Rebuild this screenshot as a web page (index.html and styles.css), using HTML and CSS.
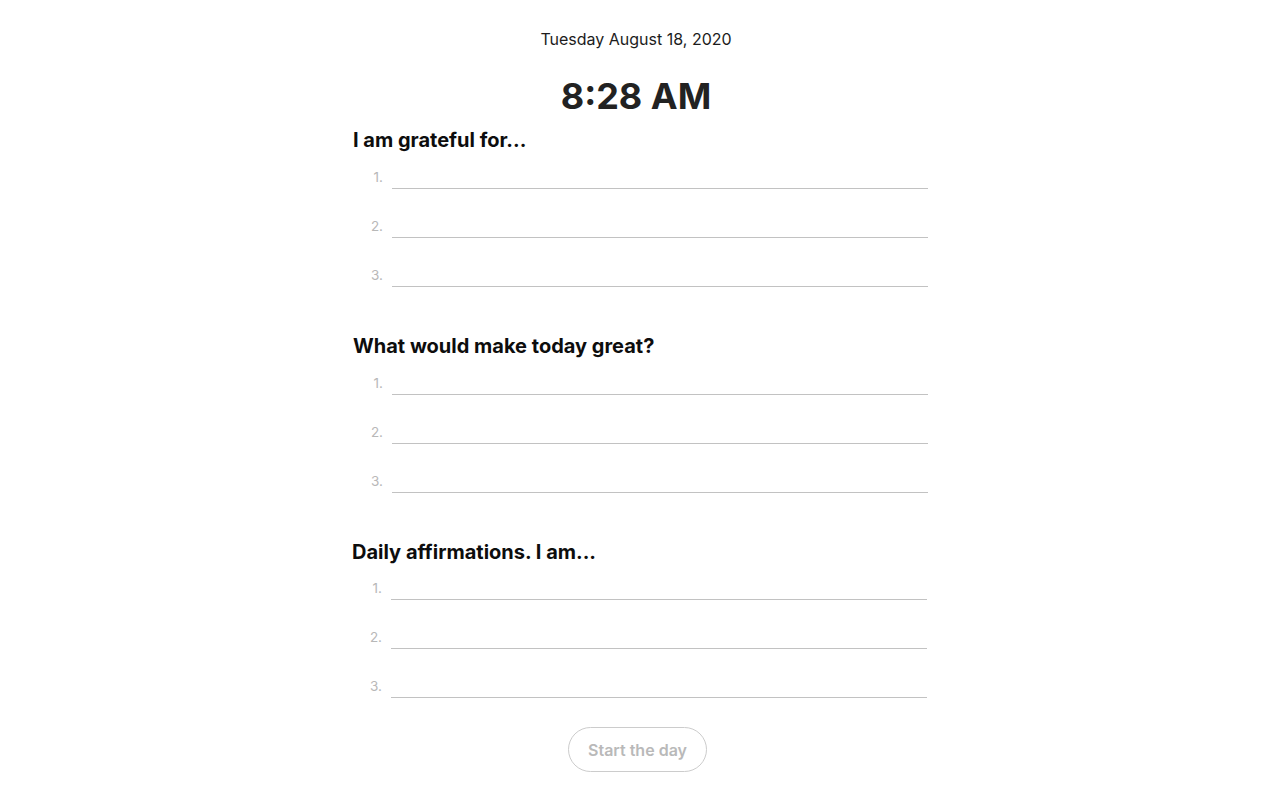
FILE: index.html
```html
<!DOCTYPE html>
<html lang="en">
<head>
<meta charset="utf-8">
<title>Morning journal</title>
<link rel="stylesheet" href="styles.css">
</head>
<body>
<main class="page">
  <header class="header">
    <div class="date">Tuesday August 18, 2020</div>
    <div class="time">8:28 AM</div>
  </header>

  <section class="section">
    <h2 class="heading">I am grateful for...</h2>
    <ol class="list">
      <li class="row"><span class="num">1.</span><input class="field" type="text"></li>
      <li class="row"><span class="num">2.</span><input class="field" type="text"></li>
      <li class="row"><span class="num">3.</span><input class="field" type="text"></li>
    </ol>
  </section>

  <section class="section">
    <h2 class="heading">What would make today great?</h2>
    <ol class="list">
      <li class="row"><span class="num">1.</span><input class="field" type="text"></li>
      <li class="row"><span class="num">2.</span><input class="field" type="text"></li>
      <li class="row"><span class="num">3.</span><input class="field" type="text"></li>
    </ol>
  </section>

  <section class="section section-shift">
    <h2 class="heading">Daily affirmations. I am...</h2>
    <ol class="list">
      <li class="row"><span class="num">1.</span><input class="field" type="text"></li>
      <li class="row"><span class="num">2.</span><input class="field" type="text"></li>
      <li class="row"><span class="num">3.</span><input class="field" type="text"></li>
    </ol>
  </section>

  <div class="actions">
    <button class="start" type="button" disabled>Start the day</button>
  </div>
</main>
</body>
</html>
```

FILE: styles.css
```css
* { box-sizing: border-box; }

html, body {
  margin: 0;
  padding: 0;
  background: #ffffff;
}

body {
  font-family: Inter, "Noto Sans", "Liberation Sans", sans-serif;
  color: #111111;
}

.page {
  width: 600px;
  margin-left: calc(50% - 304px);
  padding-top: 27px;
  padding-bottom: 20px;
}

.header {
  display: flex;
  flex-direction: column;
  align-items: center;
}

.date {
  font-size: 16px;
  line-height: 24px;
  color: #1c1c1c;
}

.time {
  margin-top: 22px;
  font-size: 36px;
  line-height: 46px;
  font-weight: 700;
  color: #222222;
}

.section {
  padding-left: 17px;
  margin-top: 47px;
}

.header + .section {
  margin-top: 9px;
}

.section-shift {
  padding-left: 16px;
}

.heading {
  margin: 0;
  font-size: 20px;
  line-height: 24px;
  font-weight: 700;
  color: #0d0d0d;
}

.list {
  list-style: none;
  margin: 14px 0 0 0;
  padding: 0;
  display: flex;
  flex-direction: column;
  gap: 26px;
}

.section-shift .list {
  margin-top: 13px;
}

.row {
  display: flex;
  align-items: center;
}

.num {
  width: 30px;
  margin-right: 9px;
  margin-bottom: 1px;
  text-align: right;
  font-size: 13.5px;
  color: #b8b8b8;
}

.field {
  width: 536px;
  height: 23px;
  border: none;
  border-bottom: 1px solid #c2c2c2;
  outline: none;
  background: transparent;
  font-family: inherit;
  font-size: 15px;
  padding: 0 2px;
}

.actions {
  display: flex;
  justify-content: center;
  margin-top: 29px;
  padding-left: 3px;
}

.start {
  height: 45px;
  padding: 0 19px;
  border: 1px solid #cccccc;
  border-radius: 23px;
  background: #ffffff;
  font-family: inherit;
  font-size: 16px;
  font-weight: 600;
  color: #b9b9b9;
  cursor: default;
}
```
